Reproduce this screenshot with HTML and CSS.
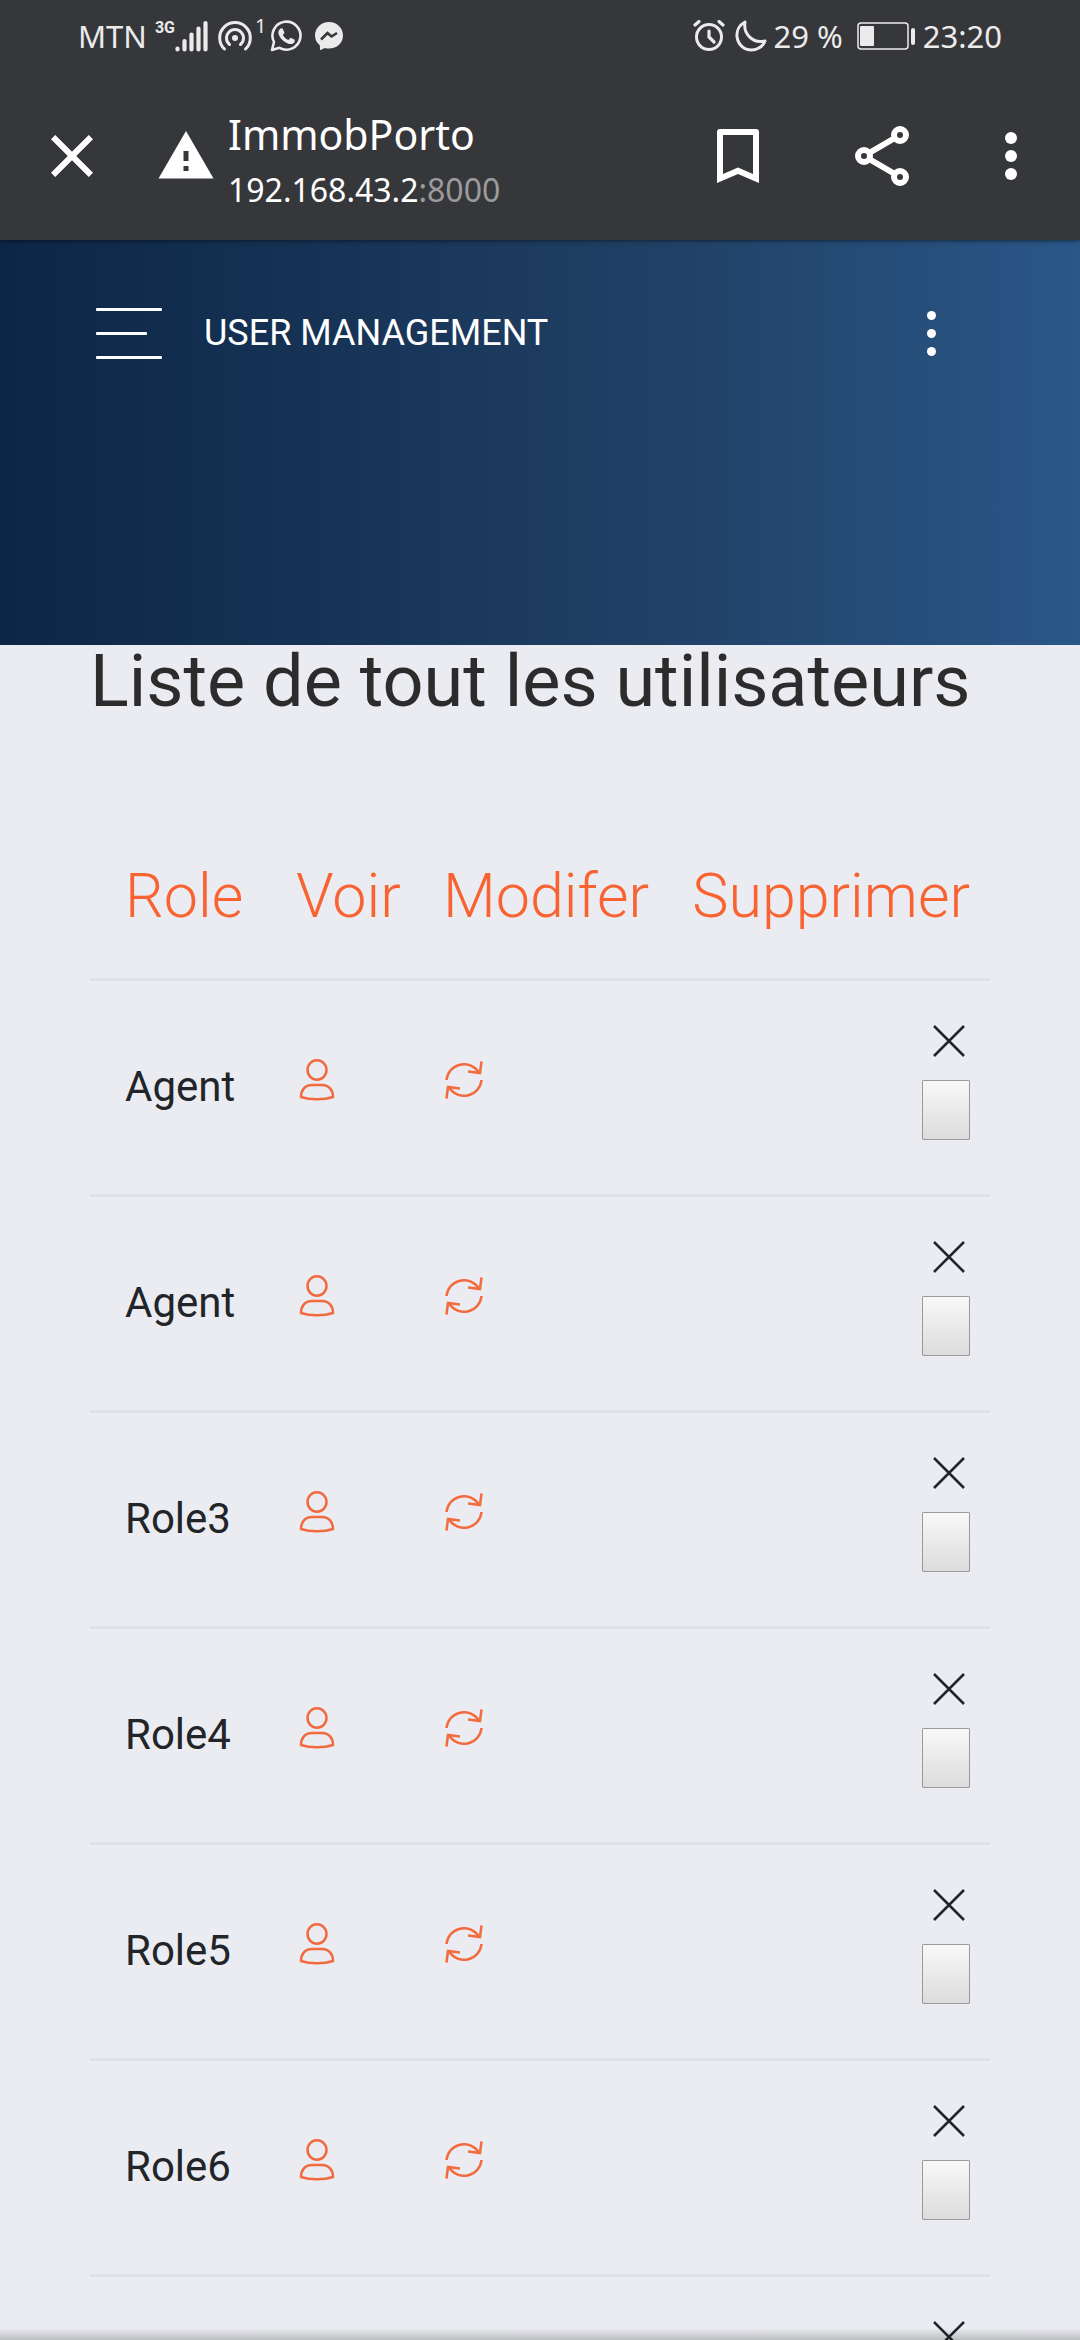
FILE: index.html
```html
<!DOCTYPE html>
<html lang="fr">
<head>
<meta charset="utf-8">
<meta name="viewport" content="width=device-width">
<title>ImmobPorto</title>
<link rel="stylesheet" href="styles.css">
</head>
<body>
<svg class="symbols" aria-hidden="true">
  <symbol id="user" viewBox="0 0 42 42">
    <ellipse cx="21" cy="11" rx="9.500" ry="9.750"/>
    <path d="M16 26h10c7 0 11 5 11 12-9 3-23 3-32 0 0-7 4-12 11-12z"/>
  </symbol>
  <symbol id="refresh" viewBox="0 0 42 42">
    <path d="M3.500 21a17.500 17.500 0 0 1 32-8M38.500 21a17.500 17.500 0 0 1-32 8"/>
    <path d="M38.500 2.500l-1.500 11.500-12-1.500M3.500 39.500L5 28l12 1.500"/>
  </symbol>
  <symbol id="cross" viewBox="0 0 42 42">
    <path d="M6 6l30 30M36 6L6 36"/>
  </symbol>
</svg>
<div class="screen">
  <header class="browser">
    <div class="status">
      <div class="status-left">
        <span>MTN</span>
        <span class="network">3G</span>
        <svg class="signal" viewBox="0 0 34 32" width="34" height="32"><path d="M2.500 28.500v1M9.500 21v8.500M16.500 14.500v15M23.500 8.500v21M30.500 3v26.500" stroke="currentColor" stroke-width="4.200" stroke-linecap="round"/></svg>
        <svg class="hotspot" viewBox="0 0 36 32" width="36" height="32" fill="none" stroke="currentColor" stroke-width="3" stroke-linecap="round"><circle cx="18" cy="18" r="3" fill="currentColor" stroke="none"/><path d="M12.500 24.500a8.500 8.500 0 1 1 11 0M7.500 29a15.300 15.300 0 1 1 21 0"/></svg>
        <span class="count">1</span>
        <svg class="whatsapp" viewBox="0 0 32 32" width="32" height="32"><path d="M2 30l2-8a14 14 0 1 1 5.500 5.800z" fill="none" stroke="currentColor" stroke-width="2.600" stroke-linejoin="round"/><path d="M10.500 8.500l2-.3 2 4.500-1.600 2.300c1.400 2.500 3 4 5.500 5l2.200-2.300 4.200 2-.3 2.300c-1 2-3.500 2.500-6 1.700-5-1.700-8.500-5.500-10-9.700-.5-2.300.5-4.500 2-5.500z" fill="currentColor"/></svg>
        <svg viewBox="0 0 30 30" width="30" height="30"><path d="M15 1C7 1 1 7 1 14.500c0 4 1.800 7.300 4.800 9.800l.3 5 4.700-2.300c1.300.4 2.700.6 4.200.6 8 0 14-5.700 14-13.100S23 1 15 1z" fill="currentColor"/><path d="M7 18.500l6.500-6.500 4 3.500 5.500-3.500" fill="none" stroke="#36373b" stroke-width="2.600"/></svg>
      </div>
      <div class="status-right">
        <svg viewBox="0 0 32 32" width="32" height="32" fill="none" stroke="currentColor" stroke-width="3" stroke-linecap="round"><circle cx="16" cy="17" r="12.500"/><path d="M16 11v6l5 5M2 5l4-3.500M30 5l-4-3.500" stroke-width="3.200"/></svg>
        <svg class="moon" viewBox="0 0 32 32" width="32" height="32"><path d="M10 2C4 5 1.500 11 2 16.500 3 25 9 30 16.500 30c6 0 11.500-3.500 13.500-9C18 24 8 14 10 2z" fill="none" stroke="currentColor" stroke-width="3" stroke-linejoin="round"/></svg>
        <span>29 %</span>
        <svg class="battery" viewBox="0 0 58 28" width="58" height="28"><rect x="1" y="1" width="50" height="26" rx="3" fill="none" stroke="currentColor" stroke-width="1.500"/><rect x="3" y="4" width="14" height="20" rx="1" fill="currentColor"/><rect x="54" y="6" width="4" height="17" rx="2" fill="currentColor"/></svg>
        <span>23:20</span>
      </div>
    </div>
    <div class="toolbar">
      <button class="tool" aria-label="Fermer"><svg viewBox="0 0 24 24" width="72" height="72"><path d="M19 6.410L17.590 5 12 10.590 6.410 5 5 6.410 10.590 12 5 17.590 6.410 19 12 13.410 17.590 19 19 17.590 13.410 12z"/></svg></button>
      <svg class="warning" viewBox="0 0 24 24" width="60" height="60"><path d="M1 21h22L12 2 1 21zm12-3h-2v-2h2v2zm0-4h-2v-4h2v4z"/></svg>
      <div class="site">
        <div class="site-name">ImmobPorto</div>
        <div class="site-url">192.168.43.2<span class="port">:8000</span></div>
      </div>
      <button class="tool" aria-label="Ajouter aux favoris"><svg viewBox="0 0 24 24" width="72" height="72"><path d="M18 3H6a1 1 0 0 0-1 1v17l7-3 7 3V4a1 1 0 0 0-1-1zm-1 15l-5-2.180L7 18V5h10z"/></svg></button>
      <button class="tool" aria-label="Partager"><svg viewBox="0 0 24 24" width="72" height="72"><path d="M6 12l12-7M6 12l12 7" stroke="#fff" stroke-width="2"/><g fill="#36373b" stroke="#fff" stroke-width="2"><circle cx="18" cy="5" r="2"/><circle cx="6" cy="12" r="2"/><circle cx="18" cy="19" r="2"/></g></svg></button>
      <button class="tool more" aria-label="Plus d'options"><svg viewBox="0 0 24 24" width="72" height="72"><circle cx="12" cy="6" r="2"/><circle cx="12" cy="12" r="2"/><circle cx="12" cy="18" r="2"/></svg></button>
    </div>
  </header>

  <nav class="banner">
    <button class="menu" aria-label="Menu"><span class="bar"></span><span class="bar short"></span><span class="bar"></span></button>
    <a class="brand" href="#">USER MANAGEMENT</a>
    <button class="dots" aria-label="Options"><span class="dot"></span><span class="dot"></span><span class="dot"></span></button>
  </nav>

  <main class="content">
    <h1 class="title">Liste de tout les utilisateurs</h1>
    <table class="users">
      <colgroup><col class="col-role"><col class="col-view"><col class="col-edit"><col></colgroup>
      <thead>
        <tr><th>Role</th><th>Voir</th><th>Modifer</th><th class="remove">Supprimer</th></tr>
      </thead>
      <tbody>
        <tr><td>Agent</td><td><a class="action" href="#" aria-label="Voir"><svg class="icon"><use href="#user"/></svg></a></td><td><a class="action" href="#" aria-label="Modifier"><svg class="icon"><use href="#refresh"/></svg></a></td><td class="remove"><div class="stack"><svg class="icon dark"><use href="#cross"/></svg><button class="delete" aria-label="Supprimer"></button></div></td></tr>
        <tr><td>Agent</td><td><a class="action" href="#" aria-label="Voir"><svg class="icon"><use href="#user"/></svg></a></td><td><a class="action" href="#" aria-label="Modifier"><svg class="icon"><use href="#refresh"/></svg></a></td><td class="remove"><div class="stack"><svg class="icon dark"><use href="#cross"/></svg><button class="delete" aria-label="Supprimer"></button></div></td></tr>
        <tr><td>Role3</td><td><a class="action" href="#" aria-label="Voir"><svg class="icon"><use href="#user"/></svg></a></td><td><a class="action" href="#" aria-label="Modifier"><svg class="icon"><use href="#refresh"/></svg></a></td><td class="remove"><div class="stack"><svg class="icon dark"><use href="#cross"/></svg><button class="delete" aria-label="Supprimer"></button></div></td></tr>
        <tr><td>Role4</td><td><a class="action" href="#" aria-label="Voir"><svg class="icon"><use href="#user"/></svg></a></td><td><a class="action" href="#" aria-label="Modifier"><svg class="icon"><use href="#refresh"/></svg></a></td><td class="remove"><div class="stack"><svg class="icon dark"><use href="#cross"/></svg><button class="delete" aria-label="Supprimer"></button></div></td></tr>
        <tr><td>Role5</td><td><a class="action" href="#" aria-label="Voir"><svg class="icon"><use href="#user"/></svg></a></td><td><a class="action" href="#" aria-label="Modifier"><svg class="icon"><use href="#refresh"/></svg></a></td><td class="remove"><div class="stack"><svg class="icon dark"><use href="#cross"/></svg><button class="delete" aria-label="Supprimer"></button></div></td></tr>
        <tr><td>Role6</td><td><a class="action" href="#" aria-label="Voir"><svg class="icon"><use href="#user"/></svg></a></td><td><a class="action" href="#" aria-label="Modifier"><svg class="icon"><use href="#refresh"/></svg></a></td><td class="remove"><div class="stack"><svg class="icon dark"><use href="#cross"/></svg><button class="delete" aria-label="Supprimer"></button></div></td></tr>
        <tr><td></td><td></td><td></td><td class="remove"><div class="stack"><svg class="icon dark"><use href="#cross"/></svg><button class="delete" aria-label="Supprimer"></button></div></td></tr>
      </tbody>
    </table>
  </main>
  <div class="edge"></div>
</div>
</body>
</html>
```
FILE: styles.css
```css
* { box-sizing: border-box; }

body {
  margin: 0;
  background: #ebecf1;
  color: #212529;
  font-family: Roboto, "Liberation Sans", sans-serif;
}

button {
  padding: 0;
  border: 0;
  background: none;
  color: inherit;
}

svg { display: block; flex: none; }

.symbols { position: absolute; width: 0; height: 0; }

.screen {
  position: relative;
  display: flex;
  flex-direction: column;
  height: 100vh;
  overflow: hidden;
}

/* Browser chrome */
.browser {
  position: relative;
  flex: none;
  background: #36373b;
  color: #fff;
  font-family: "Noto Sans", sans-serif;
  box-shadow: 0 1px 4px rgba(0, 0, 0, 0.5);
}

.status {
  display: flex;
  justify-content: space-between;
  height: 72px;
  padding: 0 78px;
  color: #ebebeb;
  font-size: 31px;
}

.status-left,
.status-right { display: flex; align-items: center; }

.network {
  align-self: flex-start;
  margin: 18px 0 0 8px;
  font: 700 16px/20px Roboto, sans-serif;
}

.hotspot { margin-left: 8px; }

.count {
  align-self: flex-start;
  margin: 14px 4px 0 2px;
  font-size: 20px;
  line-height: 24px;
}

.whatsapp { margin-right: 12px; }

.moon { margin: 0 6px 0 10px; }

.battery { margin: 0 8px 0 14px; }

.toolbar {
  display: flex;
  align-items: center;
  height: 168px;
  padding-right: 12px;
  fill: #fff;
}

.tool {
  display: flex;
  flex: none;
  justify-content: center;
  width: 144px;
}

.more { width: 114px; }

.warning { margin: 0 12px; }

.site { flex: 1; padding-top: 12px; }

.site-name { font-size: 41px; line-height: 56px; }

.site-url { font-size: 32px; line-height: 56px; }

.port { color: #9b9b9d; }

/* Page banner */
.banner {
  display: flex;
  flex: none;
  align-items: flex-start;
  height: 405px;
  padding: 66px 144px 0 96px;
  background: linear-gradient(to right, #0c2646 0%, #204065 60%, #2a5788 100%);
  color: #fff;
}

.menu {
  display: flex;
  flex-direction: column;
  gap: 21px;
  width: 66px;
  padding: 2px 0;
}

.bar { height: 3px; border-radius: 1px; background: #fff; }

.short { width: 51px; }

.brand {
  flex: 1;
  margin-left: 42px;
  color: #fff;
  font-size: 36px;
  line-height: 54px;
  text-decoration: none;
}

.dots {
  display: flex;
  flex-direction: column;
  gap: 9px;
  padding: 5px 0;
}

.dot { width: 9px; height: 9px; border-radius: 50%; background: #fff; }

/* User list */
.content {
  flex: 1;
  min-height: 0;
  padding: 0 90px;
}

.title {
  margin: 0 0 94px;
  color: #2c2c2c;
  font-size: 72px;
  font-weight: 400;
  line-height: 74px;
  white-space: nowrap;
}

.users {
  width: 100%;
  border-collapse: separate;
  border-spacing: 0;
  table-layout: fixed;
  font-size: 42px;
}

.col-role { width: 186px; }
.col-view { width: 147px; }
.col-edit { width: 248px; }

.users th {
  height: 165px;
  padding: 0 20px;
  color: #f96332;
  font-size: 61px;
  font-weight: 300;
  text-align: left;
}

.users td {
  height: 216px;
  padding: 0 20px 2px;
  border-top: 3px solid #dee2e6;
}

.users th:first-child,
.users td:first-child { padding-left: 35px; }

.users .remove { text-align: right; }

.action { display: inline-block; padding-bottom: 14px; vertical-align: middle; }

.icon {
  width: 42px;
  height: 42px;
  fill: none;
  stroke: #f26a3d;
  stroke-width: 2.5px;
}

.dark { stroke: #212529; }

.stack {
  display: flex;
  flex-direction: column;
  align-items: flex-end;
  gap: 18px;
  padding-bottom: 13px;
}

.delete {
  width: 48px;
  height: 60px;
  border: 1px solid #999;
  border-radius: 1px;
  background: linear-gradient(#f8f8f8, #dcdcdc);
}

/* Shade along the lower window edge */
.edge {
  position: absolute;
  right: 0;
  bottom: 0;
  left: 0;
  height: 12px;
  background: linear-gradient(rgba(0, 0, 0, 0), rgba(0, 0, 0, 0.2));
}
```
